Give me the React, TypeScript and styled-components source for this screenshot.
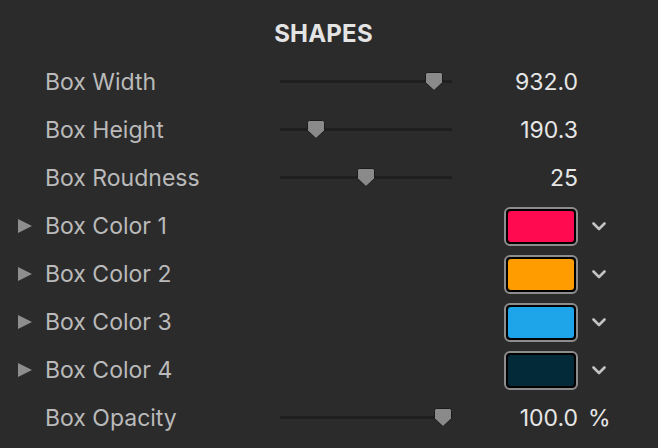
import styled, { createGlobalStyle } from 'styled-components';

const GlobalStyle = createGlobalStyle`
  body {
    margin: 0;
    background: #2b2b2b;
    font-family: Inter, "Noto Sans", "Liberation Sans", sans-serif;
  }
`;

const Panel = styled.div`
  width: 658px;
  height: 448px;
  background: #2b2b2b;
  padding-top: 19px;
  box-sizing: border-box;
`;

const Title = styled.h1`
  margin: 0 11px 4px 0;
  height: 35px;
  line-height: 30px;
  text-align: center;
  font-size: 24px;
  font-weight: 700;
  letter-spacing: 0.2px;
  color: #e4e4e4;
`;

const Row = styled.div`
  display: grid;
  grid-template-columns: 45px 235px 172px 126px 80px;
  align-items: center;
  height: 48px;
`;

const Disclosure = styled.div`
  justify-self: start;
  margin-left: 18px;
  width: 0;
  height: 0;
  border-top: 7.5px solid transparent;
  border-bottom: 7.5px solid transparent;
  border-left: 14px solid #8e8e8e;
`;

const Label = styled.div`
  font-size: 23px;
  color: #bababa;
`;

const Value = styled.div`
  justify-self: end;
  font-size: 23px;
  color: #e6e6e6;
`;

const Unit = styled.div`
  padding-left: 10px;
  font-size: 23px;
  color: #e6e6e6;
`;

const Track = styled.div`
  position: relative;
  height: 3px;
  margin-top: -1px;
  background: #1f1f1f;
  border-radius: 2px;
`;

const Thumb = styled.svg`
  position: absolute;
  top: -8px;
  width: 18px;
  height: 19px;
`;

const Swatch = styled.div<{ $color: string }>`
  justify-self: end;
  width: 74px;
  height: 39px;
  box-sizing: border-box;
  border: 2px solid #8d8d8d;
  border-radius: 6px;
  background: #000;
  padding: 2px;
  div {
    width: 100%;
    height: 100%;
    border-radius: 3px;
    background: ${(p) => p.$color};
  }
`;

const Chevron = styled.svg`
  margin-left: 14px;
  width: 14px;
  height: 9px;
`;

function Slider({ value }: { value: number }) {
  return (
    <Track>
      <Thumb viewBox="0 0 18 19" style={{ left: `${value * 154}px` }}>
        <path
          d="M2.5 0.5 H15.5 Q17.5 0.5 17.5 2.5 V10.5 L9 18.5 L0.5 10.5 V2.5 Q0.5 0.5 2.5 0.5 Z"
          fill="#8a8a8a"
          stroke="#1b1b1b"
          strokeWidth="1"
        />
      </Thumb>
    </Track>
  );
}

const sliders = [
  { label: 'Box Width', value: 0.94, text: '932.0' },
  { label: 'Box Height', value: 0.175, text: '190.3' },
  { label: 'Box Roudness', value: 0.5, text: '25' },
];

const colors = [
  { label: 'Box Color 1', color: '#ff0a50' },
  { label: 'Box Color 2', color: '#ff9d00' },
  { label: 'Box Color 3', color: '#1ea4e9' },
  { label: 'Box Color 4', color: '#032a39' },
];

export default function App() {
  return (
    <>
      <GlobalStyle />
      <Panel>
        <Title>SHAPES</Title>
        {sliders.map((s) => (
          <Row key={s.label}>
            <span />
            <Label>{s.label}</Label>
            <Slider value={s.value} />
            <Value>{s.text}</Value>
            <span />
          </Row>
        ))}
        {colors.map((c) => (
          <Row key={c.label}>
            <Disclosure />
            <Label>{c.label}</Label>
            <span />
            <Swatch $color={c.color}>
              <div />
            </Swatch>
            <Chevron viewBox="0 0 14 9">
              <path
                d="M1.5 1.5 L7 7 L12.5 1.5"
                fill="none"
                stroke="#c2c2c2"
                strokeWidth="2.6"
                strokeLinecap="round"
                strokeLinejoin="round"
              />
            </Chevron>
          </Row>
        ))}
        <Row>
          <span />
          <Label>Box Opacity</Label>
          <Slider value={1} />
          <Value>100.0</Value>
          <Unit>%</Unit>
        </Row>
      </Panel>
    </>
  );
}
